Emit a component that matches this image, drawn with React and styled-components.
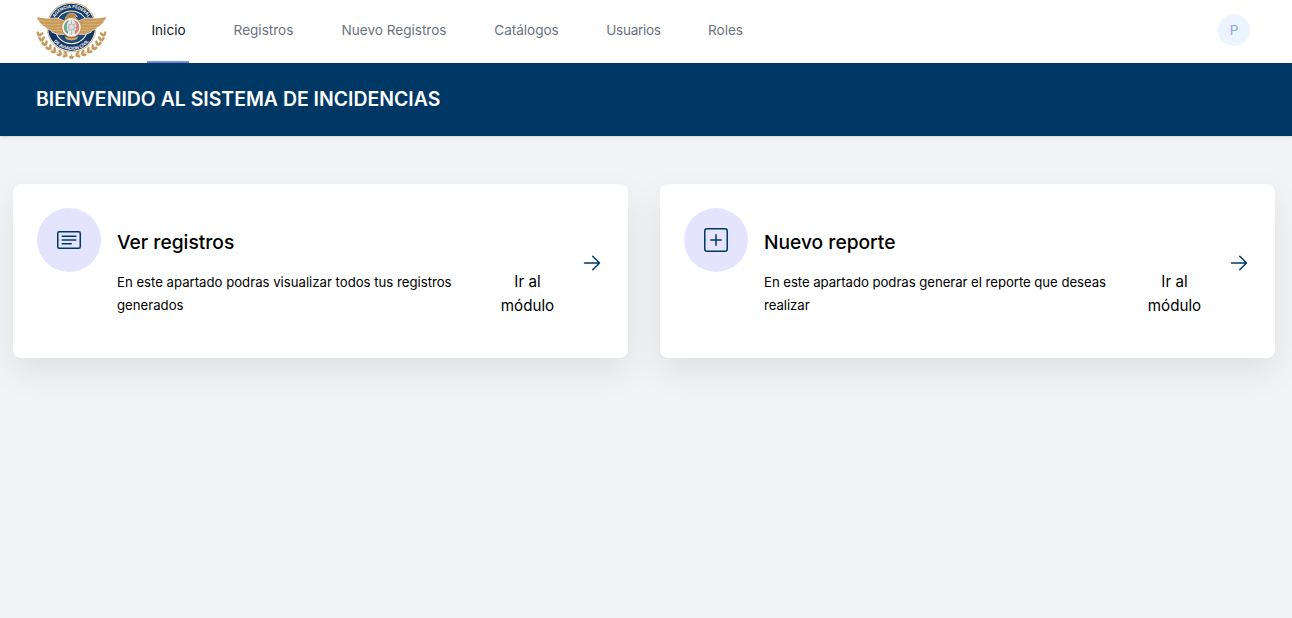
import React from "react";
import styled, { createGlobalStyle } from "styled-components";
import { BsCardText, BsPlusSquare } from "react-icons/bs";

const NAVY = "#003865";

const GlobalStyle = createGlobalStyle`
  *, *::before, *::after { box-sizing: border-box; }
  body {
    margin: 0;
    background: #f2f3f5;
    color: #000;
    font-family: Inter, "Liberation Sans", sans-serif;
  }
  h1, h2, p { margin: 0; }
  a { color: inherit; text-decoration: none; }
`;

const Page = styled.div`
  min-height: 618px;
  overflow: hidden;
`;

const TopBar = styled.nav`
  display: flex;
  height: 63px;
  padding: 0 42px 0 36px;
  background: #fff;
`;

const Brand = styled.a`
  display: block;
  width: 71px;
  margin-right: 40px;
  padding-top: 1.5px;

  svg { display: block; }
`;

const Menu = styled.div`
  display: flex;
  flex: 1;
  gap: 40px;
`;

const MenuLink = styled.a`
  display: flex;
  align-items: center;
  justify-content: center;
  width: ${(p) => p.$width}px;
  padding: 0 0 1px 1px;
  border-bottom: 2px solid ${(p) => (p.$active ? "#7b8ce0" : "transparent")};
  color: ${(p) => (p.$active ? "#111827" : "#6b7280")};
  font-size: 13.6px;
  font-weight: 400;
  letter-spacing: ${(p) => p.$track || 0}px;
  white-space: nowrap;
`;

const Avatar = styled.div`
  display: flex;
  align-items: center;
  justify-content: center;
  width: 32px;
  height: 32px;
  margin-top: 14px;
  border-radius: 50%;
  background: #ebf4ff;
  color: #8ea4ee;
  font-size: 13.5px;
`;

const Banner = styled.header`
  display: flex;
  align-items: center;
  height: 73px;
  padding: 0 36px 2px;
  background: ${NAVY};
  box-shadow: 0 1px 3px rgba(0, 0, 0, 0.1), 0 1px 2px -1px rgba(0, 0, 0, 0.1);
`;

const BannerTitle = styled.h1`
  color: #fff;
  font-size: 19.45px;
  font-weight: 600;
  line-height: 28px;
`;

const CardGrid = styled.main`
  display: grid;
  grid-template-columns: 1fr 1fr;
  gap: 32px;
  padding: 48px 17px 0 13px;
`;

const Card = styled.a`
  display: grid;
  grid-template-columns: 64px 360px 54px 24px;
  column-gap: 16px;
  height: 174px;
  padding: 24px;
  border-radius: 8px;
  background: #fff;
  box-shadow: 0 14px 34px rgba(0, 0, 0, 0.08);
`;

const IconDisc = styled.div`
  display: flex;
  align-items: center;
  justify-content: center;
  width: 64px;
  height: 64px;
  border-radius: 50%;
  background: #e5e4ff;
  color: ${NAVY};
`;

const CardTitle = styled.h2`
  margin-top: 20px;
  font-size: 19.2px;
  font-weight: 550;
  line-height: 28px;
`;

const CardText = styled.p`
  margin-top: 15px;
  font-size: 13.2px;
  line-height: 23px;
  letter-spacing: ${(p) => p.$track || 0}px;
`;

const CardAction = styled.span`
  margin: 62px -7.5px 0 7.5px;
  font-size: 15.2px;
  line-height: 24px;
  text-align: center;
`;

const ArrowSlot = styled.span`
  margin: 43px 0 0 17px;
  color: ${NAVY};

  svg { display: block; }
`;

const leaves = [
  [29, 99, 15], [34, 114, -5], [43, 128, -20], [55, 141, -34], [69, 151, -48], [86, 160, -62], [103, 164, -76],
];

const Laurel = () => (
  <g>
    <path d="M24 96Q38 152 111 167" fill="none" stroke="#c9a063" strokeWidth="2" />
    {leaves.map(([x, y, r]) => (
      <g key={x} transform={`translate(${x} ${y}) rotate(${r})`} fill="#c49a5c">
        <ellipse cx="-5" cy="1" rx="4" ry="8" transform="rotate(-32)" />
        <ellipse cx="6" cy="-1" rx="4" ry="8" transform="rotate(34)" />
      </g>
    ))}
  </g>
);

const Wing = () => (
  <g>
    <path
      d="M20 50Q48 57 83 54L109 65L103 103Q83 106 66 97L62 91Q51 90 47 82Q38 81 35 73Q27 70 26 62Q20 58 20 50Z"
      fill="#c99b59"
      stroke="#fff"
      strokeWidth="2"
    />
    <path
      d="M26 61Q51 66 89 64M35 72Q57 76 92 73M47 81Q65 86 96 82M62 91Q76 94 98 91"
      fill="none"
      stroke="#e3c693"
      strokeWidth="1.5"
    />
  </g>
);

const Seal = () => (
  <svg width="71" height="57.33" viewBox="18 6 214 172" role="img" aria-label="Agencia Federal de Aviación Civil">
    <defs>
      <path id="arcTop" d="M67 82A58 58 0 0 1 183 82" />
      <path id="arcBottom" d="M57 82A68 68 0 0 0 193 82" />
    </defs>
    <Laurel />
    <g transform="translate(250 0) scale(-1 1)"><Laurel /></g>
    <circle cx="125" cy="82" r="75" fill="#c9a063" />
    <circle cx="125" cy="82" r="73" fill="#fff" />
    <circle cx="125" cy="82" r="71" fill="#143763" />
    <circle cx="125" cy="82" r="51" fill="#fff" />
    <circle cx="125" cy="82" r="48" fill="#234a76" />
    <Wing />
    <g transform="translate(250 0) scale(-1 1)"><Wing /></g>
    <path d="M106 57Q110 39 127 39Q138 40 143 50L134 48Q143 57 145 66H105Z" fill="#b98443" stroke="#ecd8b6" strokeWidth="1.5" />
    <circle cx="125" cy="82" r="31" fill="#c69552" />
    <circle cx="125" cy="82" r="28" fill="#f6f3ed" />
    <circle cx="125" cy="82" r="23" fill="#e5e6e3" />
    <path d="M118 60A23 23 0 0 0 114 102L115 96Q104 80 118 60Z" fill="#6fa592" />
    <path d="M132 60A23 23 0 0 1 135 103L135 96Q146 80 132 60Z" fill="#dc827c" />
    <path d="M115 72L137 94M136 71L115 94M125 59V105M104 82H147" stroke="#8d9b9d" strokeWidth="1.6" fill="none" />
    <circle cx="125" cy="81" r="9" fill="#dfe0dc" stroke="#98a09c" strokeWidth="2" />
    <path d="M104 109Q125 120 146 109L141 118Q125 125 109 118Z" fill="#d5a762" />
    <text fill="#fff" fontFamily="Inter, sans-serif" fontSize="13" fontWeight="700">
      <textPath href="#arcTop" startOffset="50%" textAnchor="middle">AGENCIA FEDERAL</textPath>
    </text>
    <text fill="#fff" fontFamily="Inter, sans-serif" fontSize="13" fontWeight="700">
      <textPath href="#arcBottom" startOffset="50%" textAnchor="middle">DE AVIACIÓN CIVIL</textPath>
    </text>
    <path d="M125 162L128 168L135 169L130 173L131 179L125 176L119 179L120 173L115 169L122 168Z" fill="#c49a5c" />
  </svg>
);

const Arrow = () => (
  <svg width="24" height="24" viewBox="0 0 24 24" fill="none" stroke="currentColor" strokeWidth="1.5">
    <path strokeLinecap="round" strokeLinejoin="round" d="M4.5 12h15m0 0l-6.75-6.75M19.5 12l-6.75 6.75" />
  </svg>
);

const menu = [
  { label: "Inicio", width: 42, track: 0, active: true },
  { label: "Registros", width: 68, track: -0.02 },
  { label: "Nuevo Registros", width: 113, track: -0.02 },
  { label: "Catálogos", width: 72, track: -0.04 },
  { label: "Usuarios", width: 62, track: -0.3 },
  { label: "Roles", width: 42, track: 0 },
];

const cards = [
  {
    title: "Ver registros",
    text: "En este apartado podras visualizar todos tus registros generados",
    Icon: BsCardText,
    track: -0.01,
  },
  {
    title: "Nuevo reporte",
    text: "En este apartado podras generar el reporte que deseas realizar",
    Icon: BsPlusSquare,
    track: -0.05,
  },
];

export default function App() {
  return (
    <Page>
      <GlobalStyle />
      <TopBar>
        <Brand href="#"><Seal /></Brand>
        <Menu>
          {menu.map((item) => (
            <MenuLink key={item.label} href="#" $active={item.active} $width={item.width} $track={item.track}>
              {item.label}
            </MenuLink>
          ))}
        </Menu>
        <Avatar>P</Avatar>
      </TopBar>
      <Banner>
        <BannerTitle>BIENVENIDO AL SISTEMA DE INCIDENCIAS</BannerTitle>
      </Banner>
      <CardGrid>
        {cards.map(({ title, text, Icon, track }) => (
          <Card key={title} href="#">
            <IconDisc><Icon size={24} /></IconDisc>
            <div>
              <CardTitle>{title}</CardTitle>
              <CardText $track={track}>{text}</CardText>
            </div>
            <CardAction>Ir al módulo</CardAction>
            <ArrowSlot><Arrow /></ArrowSlot>
          </Card>
        ))}
      </CardGrid>
    </Page>
  );
}
